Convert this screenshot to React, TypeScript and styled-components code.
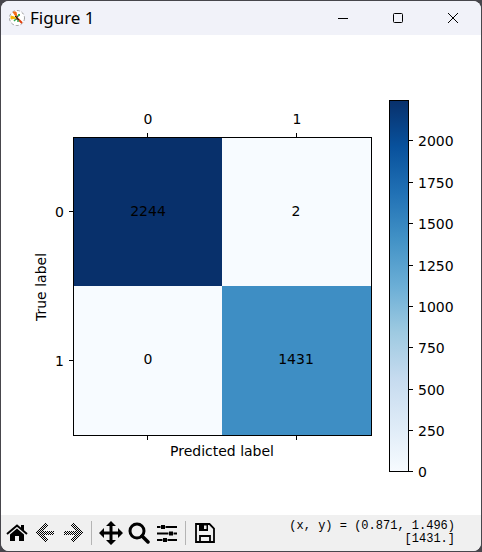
import React from "react";
import styled, { createGlobalStyle } from "styled-components";

const Global = createGlobalStyle`
  * { box-sizing: border-box; }
  html, body, #root { height: 100%; }
  body { margin: 0; background: #47464c; }
`;

const Window = styled.main`
  display: flex;
  flex-direction: column;
  min-height: 100%;
  padding: 1px;
  color: #000;
`;

const Frame = styled.div`
  display: flex;
  flex: 1;
  flex-direction: column;
  overflow: hidden;
  border-radius: 8px;
  background: #fff;
`;

const TitleBar = styled.header`
  display: flex;
  align-items: center;
  height: 34px;
  padding: 0 1px 0 8px;
  background: #f1f2f9;
`;

const Title = styled.h1`
  flex: 1;
  margin: 0 0 0 5px;
  font: 400 17px/24px "Noto Sans", "Open Sans", sans-serif;
`;

const CaptionButton = styled.button`
  display: flex;
  align-items: center;
  justify-content: center;
  width: 55px;
  height: 34px;
  padding: 0;
  border: 0;
  background: transparent;
`;

const Canvas = styled.section`
  flex: 1;
`;

const Chart = styled.svg`
  display: block;
  width: 100%;
  font-family: "DejaVu Sans", sans-serif;
  font-size: 14px;
`;

const Toolbar = styled.footer`
  display: flex;
  align-items: center;
  height: 36px;
  padding: 0 26px 0 2px;
  background: #f0f0f0;
`;

const ToolButton = styled.button`
  display: flex;
  align-items: center;
  justify-content: center;
  flex: none;
  width: 28px;
  height: 32px;
  padding: 0;
  border: 0;
  background: transparent;
`;

const Separator = styled.span`
  flex: none;
  width: 1px;
  height: 24px;
  margin: 0 5px 0 4px;
  background: #b4b4b4;
`;

const Readout = styled.output`
  flex: 1;
  font: 12px/13px "Liberation Mono", monospace;
  text-align: right;
  white-space: pre;
`;

const blues = ["#08306b", "#08519c", "#2171b5", "#4292c6", "#6baed6", "#9ecae1", "#c6dbef", "#deebf7", "#f7fbff"];

const cells = [
  { x: 73, y: 103, fill: "#08306b", value: 2244 },
  { x: 221, y: 103, fill: "#f7fbff", value: 2 },
  { x: 73, y: 251, fill: "#f7fbff", value: 0 },
  { x: 221, y: 251, fill: "#3e8ec4", value: 1431 },
];

const scale = [
  [2000, 105], [1750, 147], [1500, 188], [1250, 230], [1000, 271],
  [750, 312], [500, 354], [250, 395], [0, 436],
];

const columns = [146, 295];
const rows = [176, 325];

function ConfusionMatrix() {
  return (
    <Chart viewBox="0 0 480 480" role="img" aria-label="Confusion matrix">
      <defs>
        <linearGradient id="blues" x1="0" y1="0" x2="0" y2="1">
          {blues.map((c, i) => <stop key={c} offset={i / 8} stopColor={c} />)}
        </linearGradient>
      </defs>
      <g shapeRendering="crispEdges">
        {cells.map((c) => <rect key={c.value} x={c.x} y={c.y} width="149" height="149" fill={c.fill} />)}
        <rect x="388" y="65" width="20" height="372" fill="url(#blues)" />
      </g>
      <g fill="none" stroke="#000" shapeRendering="crispEdges">
        <rect x="72.5" y="102.5" width="298" height="298" />
        <rect x="388.5" y="65.5" width="19" height="371" />
        {columns.map((x) => <path key={x} d={`M${x + 0.5} 98v4M${x + 0.5} 401v4`} />)}
        {rows.map((y) => <path key={y} d={`M68 ${y + 0.5}h4`} />)}
        {scale.map(([v, y]) => <path key={v} d={`M408 ${y + 0.5}h4`} />)}
      </g>
      {cells.map((c) => (
        <text key={c.value} x={c.x + 74} y={c.y + 78} textAnchor="middle">{c.value}</text>
      ))}
      {columns.map((x, i) => <text key={x} x={x + 1} y="89" textAnchor="middle">{i}</text>)}
      {rows.map((y, i) => <text key={y} x="63" y={y + 6} textAnchor="end">{i}</text>)}
      {scale.map(([v, y]) => <text key={v} x="417" y={y + 6}>{v}</text>)}
      <text x="221" y="421" textAnchor="middle">Predicted label</text>
      <text transform="translate(45 252) rotate(-90)" textAnchor="middle">True label</text>
    </Chart>
  );
}

const Logo = () => (
  <svg width="16" height="16" viewBox="0 0 16 16" aria-hidden="true">
    <circle cx="8" cy="8" r="7.5" fill="#fff" stroke="#888" strokeWidth=".8" strokeDasharray="3 2" />
    <path d="M8 8 4 2h3z" fill="#f36b16" stroke="#f36b16" />
    <path d="M8 8 2 6v3z" fill="#f4b400" stroke="#f4b400" />
    <path d="m8 7 2-3 1 1z" fill="#36a852" stroke="#36a852" />
    <path d="m8 8 5 5" stroke="#e0400f" strokeWidth="2" />
    <path d="M7 9l-2 2M9 10v2" stroke="#36a852" strokeWidth="1.5" />
    <path d="M6 6l4 4M8 6v4" stroke="#222" />
  </svg>
);

const Home = () => (
  <svg width="22" height="22" viewBox="0 0 22 22" aria-hidden="true">
    <path d="m1 12 10-8.500 10 8.500" fill="none" stroke="#000" strokeWidth="2" />
    <path d="M15 3h3v6l-3-2.500zM11 6.500l7 6V19h-5v-5H9v5H4v-6.500z" />
  </svg>
);

const Arrow = ({ forward = false }: { forward?: boolean }) => {
  const id = forward ? "dither-forward" : "dither-back";
  return (
    <svg width="20" height="20" viewBox="0 0 20 20" aria-hidden="true">
      <defs>
        <pattern id={id} width="2" height="2" patternUnits="userSpaceOnUse">
          <path d="M0 0h1v1H0zM1 1h1v1H1z" shapeRendering="crispEdges" />
        </pattern>
      </defs>
      <path
        d={forward ? "M10 0 20 10 10 20 7 17l5-5H1V8h11L7 3z" : "M10 0 0 10l10 10 3-3-5-5h11V8H8l5-5z"}
        fill={`url(#${id})`}
        shapeRendering="crispEdges"
      />
    </svg>
  );
};

const Pan = () => (
  <svg width="24" height="24" viewBox="0 0 24 24" aria-hidden="true">
    <path d="M12 0l5 5h-3.500v5.500H19V7l5 5-5 5v-3.500h-5.500V19H17l-5 5-5-5h3.500v-5.500H5V17l-5-5 5-5v3.500h5.500V5H7z" />
  </svg>
);

const Zoom = () => (
  <svg width="22" height="22" viewBox="0 0 22 22" aria-hidden="true">
    <circle cx="9" cy="9" r="7" fill="none" stroke="#000" strokeWidth="3" />
    <path d="m14 14 6 6" stroke="#000" strokeWidth="3.500" strokeLinecap="round" />
  </svg>
);

const Sliders = () => (
  <svg width="20" height="20" viewBox="0 0 20 20" aria-hidden="true">
    <path d="M0 4h20M0 10.500h20M0 17h20" stroke="#000" strokeWidth="2" />
    <path d="M4 2h4v4H4zM12 8.500h4v4h-4zM6 15h4v4H6z" stroke="#f0f0f0" strokeWidth="1" paintOrder="stroke" />
  </svg>
);

const Save = () => (
  <svg width="20" height="20" viewBox="0 0 20 20" aria-hidden="true">
    <path d="M1 1h13.500L19 5.500V19H1zM5 19v-6h10v6" fill="none" stroke="#000" strokeWidth="1.800" />
    <path d="M4 1h9v7H4zM9 2.500V6h2.500V2.500z" fillRule="evenodd" />
  </svg>
);

export default function App() {
  return (
    <Window>
      <Global />
      <Frame>
        <TitleBar>
          <Logo />
          <Title>Figure 1</Title>
          <CaptionButton aria-label="Minimize">
            <svg width="10" height="10"><path d="M0 5.500h10" stroke="#000" /></svg>
          </CaptionButton>
          <CaptionButton aria-label="Maximize">
            <svg width="10" height="10"><rect x=".5" y=".5" width="9" height="9" rx="1" fill="none" stroke="#000" /></svg>
          </CaptionButton>
          <CaptionButton aria-label="Close">
            <svg width="10" height="10"><path d="m0 0 10 10M10 0 0 10" stroke="#000" /></svg>
          </CaptionButton>
        </TitleBar>
        <Canvas><ConfusionMatrix /></Canvas>
        <Toolbar>
          <ToolButton aria-label="Home"><Home /></ToolButton>
          <ToolButton aria-label="Back" disabled><Arrow /></ToolButton>
          <ToolButton aria-label="Forward" disabled><Arrow forward /></ToolButton>
          <Separator />
          <ToolButton aria-label="Pan"><Pan /></ToolButton>
          <ToolButton aria-label="Zoom"><Zoom /></ToolButton>
          <ToolButton aria-label="Configure subplots"><Sliders /></ToolButton>
          <Separator />
          <ToolButton aria-label="Save"><Save /></ToolButton>
          <Readout>{"(x, y) = (0.871, 1.496)\n[1431.]"}</Readout>
        </Toolbar>
      </Frame>
    </Window>
  );
}
